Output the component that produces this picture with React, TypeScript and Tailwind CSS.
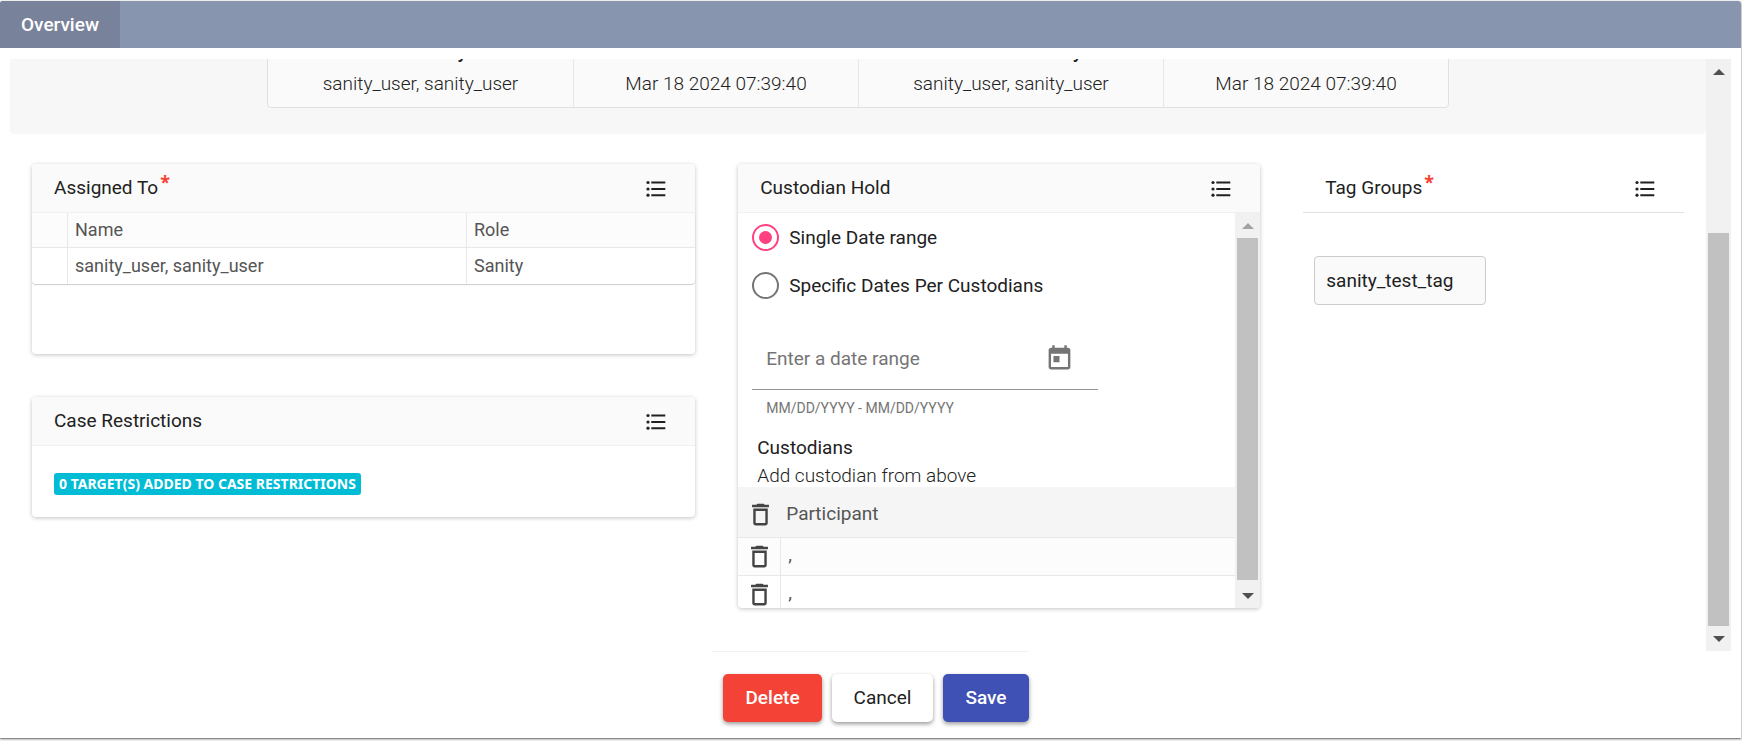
import React, { useState } from "react";
import clsx from "clsx";

const users = [{ name: "sanity_user, sanity_user", role: "Sanity" }];
const participants = [",", ","];
const tags = ["sanity_test_tag"];

const cardShadow = "shadow-[0_1px_4px_rgba(0,0,0,0.24)]";

const ListIcon = () => (
  <svg viewBox="0 0 24 24" className="size-6" fill="currentColor">
    <circle cx="4" cy="5.5" r="1.6" />
    <circle cx="4" cy="12" r="1.6" />
    <circle cx="4" cy="18.2" r="1.6" />
    <path d="M7.3 4.5h14v2h-14zM7.3 11h14v2h-14zM7.3 17.2h14v2h-14z" />
  </svg>
);

const TrashIcon = () => (
  <svg viewBox="0 0 24 24" className="size-[29px]" fill="currentColor">
    <path d="M6 19c0 1.1.9 2 2 2h8c1.1 0 2-.9 2-2V7H6v12zM8 9h8v10H8V9zm7.5-5-1-1h-5l-1 1H5v2h14V4z" />
  </svg>
);

const CalendarIcon = () => (
  <svg viewBox="0 0 24 24" className="size-[29px]" fill="currentColor">
    <path d="M19 3h-1V1h-2v2H8V1H6v2H5c-1.11 0-1.99.9-1.99 2L3 19c0 1.1.89 2 2 2h14c1.1 0 2-.9 2-2V5c0-1.1-.9-2-2-2zm0 16H5V8h14v11zM7 10h5v5H7z" />
  </svg>
);

const ScrollBar = ({ thumb, atTop }: { thumb: string; atTop?: boolean }) => (
  <div className="flex w-[25px] shrink-0 flex-col items-center bg-[#f1f1f1]" aria-hidden="true">
    <div className="flex h-[25px] shrink-0 items-center">
      <svg viewBox="0 0 12 6" className={clsx("h-[6px] w-3", atTop ? "text-[#a3a3a3]" : "text-[#505050]")} fill="currentColor">
        <path d="M0 6 6 0l6 6z" />
      </svg>
    </div>
    <div className={clsx("flex w-[21px] grow flex-col", atTop ? "justify-start" : "justify-end")}>
      <div className={clsx("bg-[#c1c1c1]", thumb)} />
    </div>
    <div className="flex h-[25px] shrink-0 items-center">
      <svg viewBox="0 0 12 6" className="h-[6px] w-3 text-[#505050]" fill="currentColor">
        <path d="M0 0h12L6 6z" />
      </svg>
    </div>
  </div>
);

const CardHeader = ({ title, required, plain }: { title: string; required?: boolean; plain?: boolean }) => (
  <div className={clsx("flex h-[49px] items-center justify-between border-b pl-[22px] pr-[27px]", plain ? "border-[#e0e0e0]" : "rounded-t border-[#f0f0f0] bg-[#fafafa]")}>
    <h2 className="flex text-[#212121]">
      {title}
      {required && <span className="ml-0.5 h-4 font-['Noto_Sans',sans-serif] text-lg leading-4 font-bold text-[#f44336]">*</span>}
    </h2>
    <button type="button" aria-label={`${title} list`} className="pt-0.5 text-[#212121]">
      <ListIcon />
    </button>
  </div>
);

const App = () => {
  const [mode, setMode] = useState("single");

  return (
    <div className="flex min-h-screen flex-col bg-[#f5f5f5] pt-px pr-px pb-[3px] font-['Roboto',sans-serif] text-[19px] leading-7 text-[#212121]">
      <div className="flex grow flex-col rounded-t-[3px] bg-white shadow-[0_1px_2px_rgba(0,0,0,0.6)]">
        <nav className="flex h-[47px] rounded-t-[3px] bg-[#8895af]">
          <a href="#overview" className="flex w-[120px] items-center justify-center rounded-tl-[3px] bg-[#79829b] font-medium text-white">
            Overview
          </a>
        </nav>

        <div className="mx-[10px] mt-[11px] flex grow">
          <main className="min-w-0 grow overflow-hidden">
            <section className="flex h-[75px] items-end overflow-hidden rounded-b bg-[#f7f7f7] px-[257px] pb-[26px]">
              <table className="w-full table-fixed border-separate border-spacing-0 rounded-b border border-[#e0e0e0] bg-[#fafafa] text-center">
                <thead>
                  <tr className="h-8 leading-5">
                    <th className="w-[305px] p-0 align-bottom font-medium">Created By</th>
                    <th className="border-l border-[#e8e8e8]" />
                    <th className="w-[305px] border-l border-[#e8e8e8] p-0 align-bottom font-medium">Last Modified By</th>
                    <th className="border-l border-[#e8e8e8]" />
                  </tr>
                </thead>
                <tbody>
                  <tr className="h-[45px] font-light">
                    <td className="pb-0.5">sanity_user, sanity_user</td>
                    <td className="border-l border-[#e8e8e8] pb-0.5">Mar 18 2024 07:39:40</td>
                    <td className="border-l border-[#e8e8e8] pb-0.5">sanity_user, sanity_user</td>
                    <td className="border-l border-[#e8e8e8] pb-0.5">Mar 18 2024 07:39:40</td>
                  </tr>
                </tbody>
              </table>
            </section>

            <div className="grid grid-cols-12 items-start gap-x-[43px] px-[22px] pt-[30px]">
              <div className="col-span-5 space-y-[43px]">
                <section className={clsx("h-[190px] rounded bg-white", cardShadow)}>
                  <CardHeader title="Assigned To" required />
                  <table className="w-full border-separate border-spacing-0 rounded-b text-left text-lg text-[#555] shadow-[0_1px_1px_rgba(0,0,0,0.2)]">
                    <thead>
                      <tr className="h-[35px] bg-[#fcfcfc]">
                        <th className="w-9 border-r border-b border-[#e8e8e8]" />
                        <th className="w-[399px] border-r border-b border-[#e8e8e8] px-[7px] font-normal">Name</th>
                        <th className="border-b border-[#e8e8e8] px-[7px] font-normal">Role</th>
                      </tr>
                    </thead>
                    <tbody>
                      {users.map((user) => (
                        <tr key={user.name} className="h-9">
                          <td className="border-r border-[#e8e8e8]" />
                          <td className="border-r border-[#e8e8e8] px-[7px]">{user.name}</td>
                          <td className="px-[7px]">{user.role}</td>
                        </tr>
                      ))}
                    </tbody>
                  </table>
                </section>

                <section className={clsx("rounded bg-white pb-[22px]", cardShadow)}>
                  <CardHeader title="Case Restrictions" />
                  <div className="flex px-[22px] pt-[27px]">
                    <span className="rounded-[3px] bg-[#00bcd4] px-[5px] font-['Noto_Sans',sans-serif] text-sm leading-[22px] font-bold text-white uppercase">
                      0 target(s) added to case restrictions
                    </span>
                  </div>
                </section>
              </div>

              <section className={clsx("col-span-4 overflow-hidden rounded bg-white", cardShadow)}>
                <CardHeader title="Custodian Hold" />
                <div className="flex h-[395px]">
                  <div className="min-w-0 grow overflow-hidden">
                    <div className="px-[14px] pt-[10px]">
                      <label className="flex h-[29px] items-center gap-[10px]">
                        <input
                          type="radio"
                          name="mode"
                          checked={mode === "single"}
                          onChange={() => setMode("single")}
                          className="size-[27px] appearance-none rounded-full border-2 border-[#757575] bg-clip-content p-[5px] checked:border-[#ff4081] checked:bg-[#ff4081]"
                        />
                        Single Date range
                      </label>
                      <label className="mt-[19px] flex h-[29px] items-center gap-[10px]">
                        <input
                          type="radio"
                          name="mode"
                          checked={mode === "specific"}
                          onChange={() => setMode("specific")}
                          className="size-[27px] appearance-none rounded-full border-2 border-[#757575] bg-clip-content p-[5px] checked:border-[#ff4081] checked:bg-[#ff4081]"
                        />
                        Specific Dates Per Custodians
                      </label>
                      <div className="mt-7 flex h-[62px] w-[346px] items-center border-b border-[#949494] pr-6 pl-[14px] text-[#757575]">
                        <input
                          type="text"
                          aria-label="Enter a date range"
                          placeholder="Enter a date range"
                          className="min-w-0 grow outline-none placeholder:text-[#757575]"
                        />
                        <button type="button" aria-label="Open calendar">
                          <CalendarIcon />
                        </button>
                      </div>
                      <p className="mt-2 pl-[14px] text-sm text-[#757575]">MM/DD/YYYY - MM/DD/YYYY</p>
                    </div>
                    <div className="-mb-[3px] mt-4 px-[19px] leading-7">
                      <h3>Custodians</h3>
                      <p className="font-light">Add custodian from above</p>
                    </div>
                    <table className="w-full border-separate border-spacing-0 text-left text-[#555]">
                      <thead>
                        <tr className="h-[51px] bg-[#f5f5f5]">
                          <th className="w-[43px] border-b border-[#e8e8e8] pt-1">
                            <button type="button" aria-label="Delete all" className="block pl-2 text-[#444]">
                              <TrashIcon />
                            </button>
                          </th>
                          <th className="border-b border-[#e8e8e8] px-[5px] pt-1 font-normal">Participant</th>
                        </tr>
                      </thead>
                      <tbody>
                        {participants.map((participant, i) => (
                          <tr key={i} className="h-[38px] odd:bg-[#fcfcfc]">
                            <td className="border-r border-b border-[#e8e8e8]">
                              <button type="button" aria-label="Delete" className="block pl-[7px] text-[#444]">
                                <TrashIcon />
                              </button>
                            </td>
                            <td className="border-b border-[#e8e8e8] px-[7px] pb-1">{participant}</td>
                          </tr>
                        ))}
                      </tbody>
                    </table>
                  </div>
                  <ScrollBar thumb="h-[99%]" atTop />
                </div>
              </section>

              <section className="col-span-3">
                <CardHeader title="Tag Groups" required plain />
                <div className="px-[11px] pt-[43px]">
                  {tags.map((tag) => (
                    <div key={tag} className="flex h-[49px] w-[172px] items-center rounded border border-[#ccc] bg-[#fafafa] px-[11px]">
                      {tag}
                    </div>
                  ))}
                </div>
              </section>
            </div>
          </main>
          <ScrollBar thumb="h-[72.5%]" />
        </div>

        <footer className="flex justify-center pb-4">
          <div className="flex gap-[10px] border-t border-[#f3f3f3] pt-[22px] pl-[11px]">
            <button type="button" className="h-12 rounded-[5px] bg-[#f44336] px-[22px] font-medium text-white shadow-[0_2px_4px_rgba(0,0,0,0.4)]">Delete</button>
            <button type="button" className="h-12 rounded-[5px] bg-white px-[22px] shadow-[0_2px_4px_rgba(0,0,0,0.4)]">Cancel</button>
            <button type="button" className="h-12 rounded-[5px] bg-[#3f51b5] px-[22px] font-medium text-white shadow-[0_2px_4px_rgba(0,0,0,0.4)]">Save</button>
          </div>
        </footer>
      </div>
    </div>
  );
};

export default App;
